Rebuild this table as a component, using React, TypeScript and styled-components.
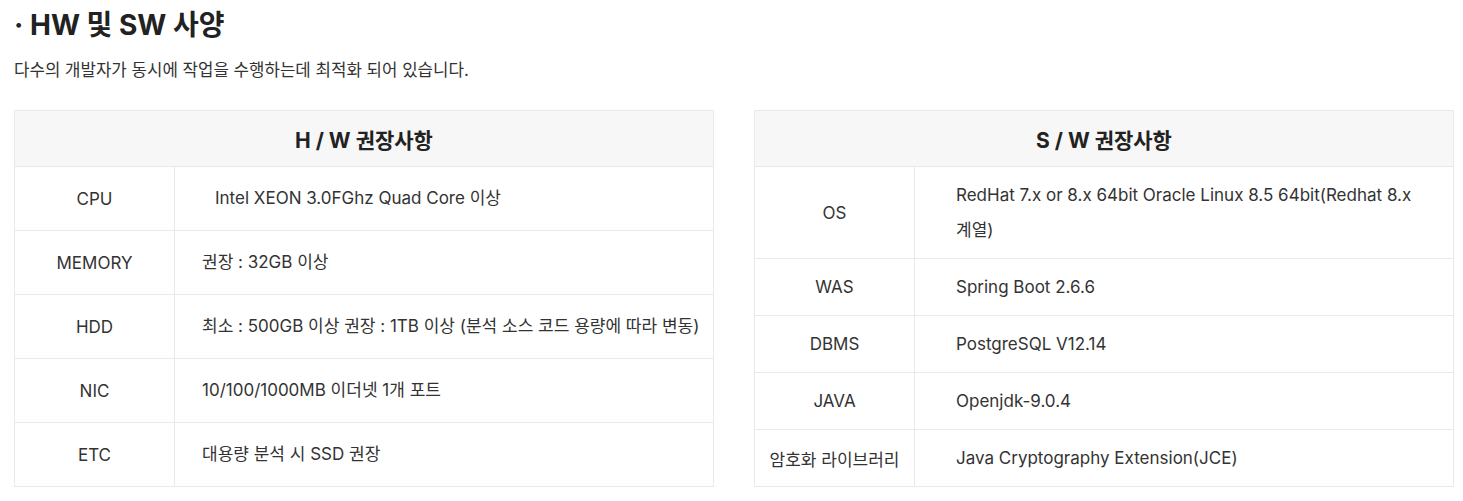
import React from "react";
import styled, { createGlobalStyle } from "styled-components";

const GlobalStyle = createGlobalStyle`
  body {
    margin: 0;
    background: #ffffff;
    font-family: "Inter", "Noto Sans CJK KR", sans-serif;
    color: #222222;
  }
`;

const Page = styled.div`
  width: 1440px;
  padding: 6px 0 0 14px;
`;

const Title = styled.h2`
  margin: 0;
  font-size: 28px;
  font-weight: 700;
  line-height: 38px;
  color: #222222;
`;

const Lead = styled.p`
  margin: 14px 0 0;
  font-size: 16.8px;
  line-height: 24px;
  color: #333333;
`;

const Tables = styled.div`
  display: grid;
  grid-template-columns: 1fr 1fr;
  gap: 40px;
  margin-top: 28px;
  align-items: start;
`;

const Table = styled.table`
  width: 100%;
  border-collapse: collapse;
  table-layout: fixed;
  font-size: 17px;
  color: #333333;
  word-break: keep-all;
`;

const LabelCol = styled.col`
  width: 160px;
`;

const HeadCell = styled.th`
  height: 55px;
  padding: 0;
  background: #f7f7f7;
  border: 1px solid #e9e9e9;
  font-size: 21px;
  font-weight: 700;
  color: #222222;
  text-align: center;
`;

const LabelCell = styled.td<{ $rowHeight: number }>`
  height: ${(p) => p.$rowHeight - 1}px;
  padding: 0 4px;
  border: 1px solid #e9e9e9;
  text-align: center;
`;

const ValueCell = styled.td<{ $indent: number }>`
  padding: 10.5px 0 10.5px ${(p) => p.$indent}px;
  line-height: 35px;
  border: 1px solid #e9e9e9;
  text-align: left;
`;

type Row = { label: string; value: string; indent?: number };

const hwRows: Row[] = [
  { label: "CPU", value: "Intel XEON 3.0FGhz Quad Core 이상", indent: 40 },
  { label: "MEMORY", value: "권장 : 32GB 이상" },
  { label: "HDD", value: "최소 : 500GB 이상 권장 : 1TB 이상 (분석 소스 코드 용량에 따라 변동)" },
  { label: "NIC", value: "10/100/1000MB 이더넷 1개 포트" },
  { label: "ETC", value: "대용량 분석 시 SSD 권장" },
];

const swRows: Row[] = [
  { label: "OS", value: "RedHat 7.x or 8.x 64bit Oracle Linux 8.5 64bit(Redhat 8.x 계열)" },
  { label: "WAS", value: "Spring Boot 2.6.6" },
  { label: "DBMS", value: "PostgreSQL V12.14" },
  { label: "JAVA", value: "Openjdk-9.0.4" },
  { label: "암호화 라이브러리", value: "Java Cryptography Extension(JCE)" },
];

const SpecTable = ({
  title,
  rows,
  rowHeight,
  indent,
}: {
  title: string;
  rows: Row[];
  rowHeight: number;
  indent: number;
}) => (
  <Table>
    <colgroup>
      <LabelCol />
      <col />
    </colgroup>
    <thead>
      <tr>
        <HeadCell colSpan={2}>{title}</HeadCell>
      </tr>
    </thead>
    <tbody>
      {rows.map((r) => (
        <tr key={r.label}>
          <LabelCell $rowHeight={rowHeight}>{r.label}</LabelCell>
          <ValueCell $indent={r.indent ?? indent}>{r.value}</ValueCell>
        </tr>
      ))}
    </tbody>
  </Table>
);

const App = () => {
  return (
    <>
      <GlobalStyle />
      <Page>
        <Title>· HW 및 SW 사양</Title>
        <Lead>다수의 개발자가 동시에 작업을 수행하는데 최적화 되어 있습니다.</Lead>
        <Tables>
          <SpecTable title="H / W 권장사항" rows={hwRows} rowHeight={64} indent={27} />
          <SpecTable title="S / W 권장사항" rows={swRows} rowHeight={57} indent={41} />
        </Tables>
      </Page>
    </>
  );
};

export default App;
